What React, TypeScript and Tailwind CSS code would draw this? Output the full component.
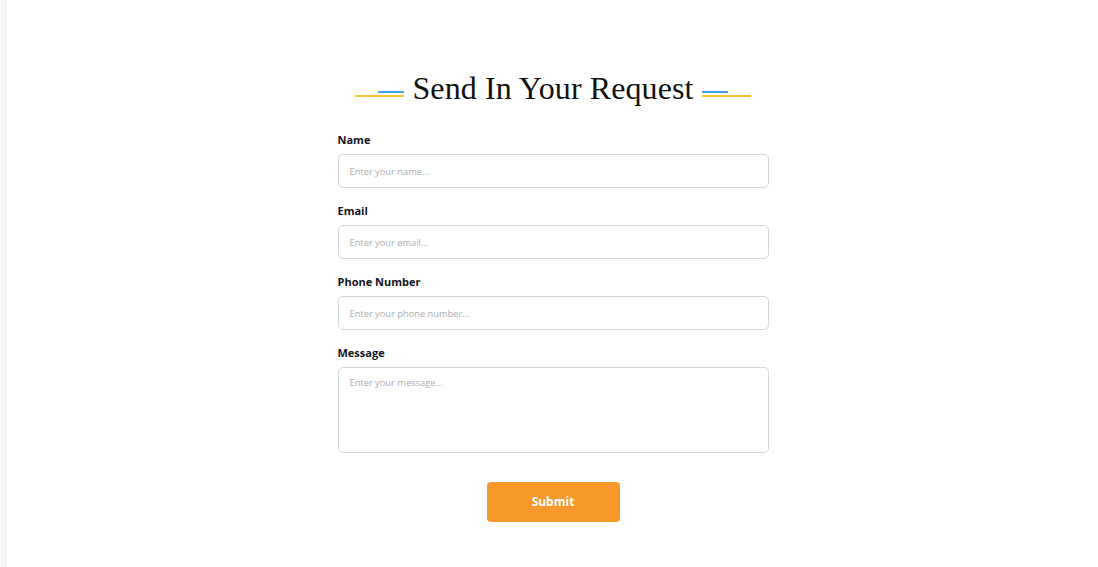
import React from "react";

const fields = [
  { label: "Name", placeholder: "Enter your name..." },
  { label: "Email", placeholder: "Enter your email..." },
  { label: "Phone Number", placeholder: "Enter your phone number..." },
];

const Deco = ({ flip }: { flip?: boolean }) => (
  <div className={"flex flex-col gap-[2px] w-[49px] " + (flip ? "items-start" : "items-end")}>
    <div className="h-[2px] w-[26px] bg-[#4da3dc]" />
    <div className="h-[2px] w-[49px] bg-[#fbc531]" />
  </div>
);

const App = () => {
  return (
    <div className="flex min-h-[567px] bg-white" style={{ fontFamily: "'Open Sans', sans-serif" }}>
      <div className="w-[6px] bg-[#f9f9f9] border-r border-[#ececec]" />
      <div className="flex-1 flex flex-col items-center pt-[68px] pl-[2px]">
        <div className="flex items-center gap-[8px]">
          <div className="mt-[12px]">
            <Deco />
          </div>
          <h1
            className="text-[32px] leading-[40px] text-[#111] tracking-[0.1px]"
            style={{ fontFamily: "'Liberation Serif', serif" }}
          >
            Send In Your Request
          </h1>
          <div className="mt-[12px]">
            <Deco flip />
          </div>
        </div>

        <form className="w-[431px] mt-[23px] flex flex-col">
          {fields.map((f) => (
            <div key={f.label} className="mb-[14px]">
              <label className="block text-[11px] leading-[18px] font-bold text-[#141424] mb-[5px]">
                {f.label}
              </label>
              <input
                placeholder={f.placeholder}
                className="w-full h-[34px] border border-[#d6d6d6] rounded-[5px] px-[11px] text-[9.3px] placeholder:text-[#aeaeae] outline-none"
              />
            </div>
          ))}
          <div>
            <label className="block text-[11px] leading-[18px] font-bold text-[#141424] mb-[5px]">
              Message
            </label>
            <textarea
              placeholder="Enter your message..."
              className="block w-full h-[86px] border border-[#d6d6d6] rounded-[5px] px-[11px] py-[8px] text-[9.3px] placeholder:text-[#aeaeae] outline-none resize-none"
            />
          </div>
          <div className="flex justify-center mt-[29px]">
            <button
              type="button"
              className="w-[133px] h-[40px] rounded-[4px] bg-[#f7992a] text-white text-[12px] font-bold"
            >
              Submit
            </button>
          </div>
        </form>
      </div>
    </div>
  );
};

export default App;
